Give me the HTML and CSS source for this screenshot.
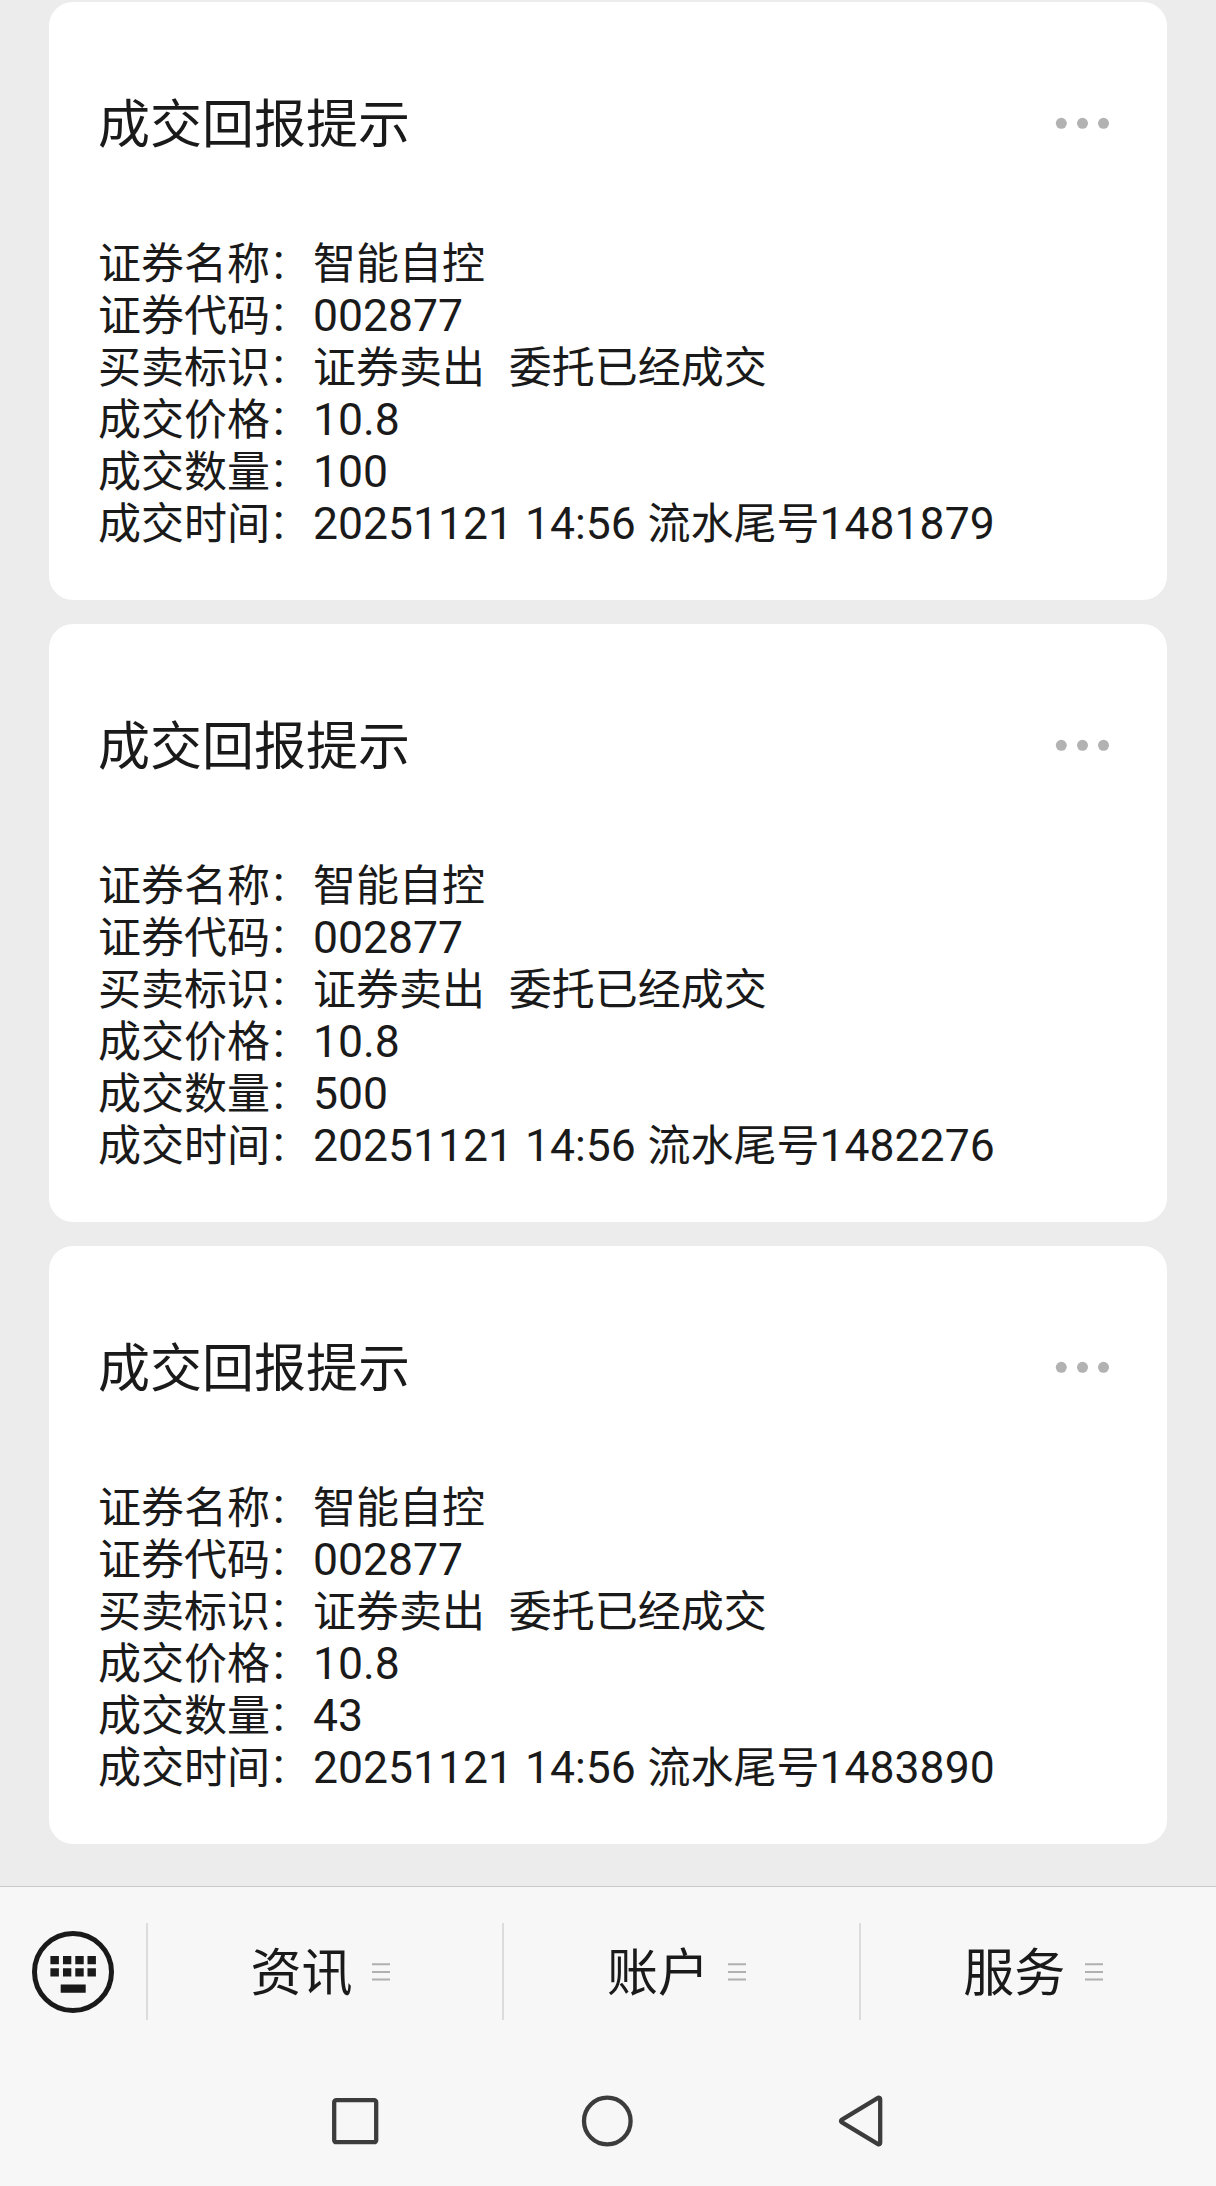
FILE: index.html
```html
<!DOCTYPE html>
<html lang="zh-CN">
<head>
<meta charset="utf-8">
<title>成交回报提示</title>
<link rel="stylesheet" href="styles.css">
</head>
<body>
<main class="feed">
  <article class="card">
    <header class="card-head">
      <h2 class="title">成交回报提示</h2>
      <svg class="more" viewBox="0 0 54 12"><circle cx="6.3" cy="6.3" r="5.5"/><circle cx="27.5" cy="6.3" r="5.5"/><circle cx="48.5" cy="6.3" r="5.5"/></svg>
    </header>
    <div class="lines">
      <p>证券名称<span class="colon">：</span>智能自控</p>
      <p>证券代码<span class="colon">：</span><span class="num">002877</span></p>
      <p>买卖标识<span class="colon">：</span>证券卖出<span class="num">  </span>委托已经成交</p>
      <p>成交价格<span class="colon">：</span><span class="num">10.8</span></p>
      <p>成交数量<span class="colon">：</span><span class="num">100</span></p>
      <p>成交时间<span class="colon">：</span><span class="num">20251121 14:56 </span>流水尾号<span class="num">1481879</span></p>
    </div>
  </article>
  <article class="card">
    <header class="card-head">
      <h2 class="title">成交回报提示</h2>
      <svg class="more" viewBox="0 0 54 12"><circle cx="6.3" cy="6.3" r="5.5"/><circle cx="27.5" cy="6.3" r="5.5"/><circle cx="48.5" cy="6.3" r="5.5"/></svg>
    </header>
    <div class="lines">
      <p>证券名称<span class="colon">：</span>智能自控</p>
      <p>证券代码<span class="colon">：</span><span class="num">002877</span></p>
      <p>买卖标识<span class="colon">：</span>证券卖出<span class="num">  </span>委托已经成交</p>
      <p>成交价格<span class="colon">：</span><span class="num">10.8</span></p>
      <p>成交数量<span class="colon">：</span><span class="num">500</span></p>
      <p>成交时间<span class="colon">：</span><span class="num">20251121 14:56 </span>流水尾号<span class="num">1482276</span></p>
    </div>
  </article>
  <article class="card">
    <header class="card-head">
      <h2 class="title">成交回报提示</h2>
      <svg class="more" viewBox="0 0 54 12"><circle cx="6.3" cy="6.3" r="5.5"/><circle cx="27.5" cy="6.3" r="5.5"/><circle cx="48.5" cy="6.3" r="5.5"/></svg>
    </header>
    <div class="lines">
      <p>证券名称<span class="colon">：</span>智能自控</p>
      <p>证券代码<span class="colon">：</span><span class="num">002877</span></p>
      <p>买卖标识<span class="colon">：</span>证券卖出<span class="num">  </span>委托已经成交</p>
      <p>成交价格<span class="colon">：</span><span class="num">10.8</span></p>
      <p>成交数量<span class="colon">：</span><span class="num">43</span></p>
      <p>成交时间<span class="colon">：</span><span class="num">20251121 14:56 </span>流水尾号<span class="num">1483890</span></p>
    </div>
  </article>
</main>
<footer class="bottom">
  <nav class="menu">
    <div class="keyboard">
      <svg width="82" height="82" viewBox="0 0 82 82">
        <circle cx="41" cy="41" r="38.5" fill="none" stroke="#1a1a1a" stroke-width="5"/>
        <path fill="#1a1a1a" d="M18.4 25h8.5v8.3h-8.5zM31 25h8.3v8.3H31zM43.3 25h8.4v8.3h-8.4zM55.5 25h8.4v8.3h-8.4zM18.4 37.2h8.5v8.4h-8.5zM31 37.2h8.3v8.4H31zM43.3 37.2h8.4v8.4h-8.4zM55.5 37.2h8.4v8.4h-8.4zM28.7 53.4h25v8.3h-25z"/>
      </svg>
    </div>
    <div class="item"><span class="label">资讯</span><svg class="bars" viewBox="0 0 18 18"><path d="M0 1.3h18M0 9h18M0 16.6h18"/></svg></div>
    <div class="item"><span class="label">账户</span><svg class="bars" viewBox="0 0 18 18"><path d="M0 1.3h18M0 9h18M0 16.6h18"/></svg></div>
    <div class="item"><span class="label">服务</span><svg class="bars" viewBox="0 0 18 18"><path d="M0 1.3h18M0 9h18M0 16.6h18"/></svg></div>
  </nav>
  <div class="system">
    <svg width="52" height="52" viewBox="0 0 52 52"><rect x="5.2" y="5.2" width="42" height="42" rx="2"/></svg>
    <svg width="52" height="52" viewBox="0 0 52 52"><circle cx="26.3" cy="26" r="23.3"/></svg>
    <svg width="52" height="52" viewBox="0 0 52 52"><path d="M9 24.6Q7 26 9 27.4L45 49.2Q47.2 49.8 47.2 47.6V4.4Q47.2 2.2 45 2.8Z"/></svg>
  </div>
</footer>
</body>
</html>
```
FILE: styles.css
```css
* { box-sizing: border-box; }
body {
  margin: 0;
  width: 1216px;
  height: 2186px;
  display: flex;
  flex-direction: column;
  overflow: hidden;
  background: #ececec;
  color: #1a1a1a;
  font-family: "Noto Sans CJK SC", sans-serif;
}
h2, p { margin: 0; font-weight: 400; }
.feed {
  height: 1886px;
  padding: 2px 49px 0;
  display: flex;
  flex-direction: column;
  gap: 24px;
}
.card {
  height: 598px;
  padding: 81px 50px 0 49px;
  background: #fff;
  border-radius: 24px;
}
.card-head {
  display: flex;
  align-items: center;
  justify-content: space-between;
  height: 80px;
}
.title { height: 80px; font-size: 52px; line-height: 76px; }
.more { width: 54px; height: 12px; margin-right: 8px; fill: #b2b2b2; }
.lines { padding-top: 71px; font-size: 43px; }
.lines p { height: 52px; line-height: 52px; white-space: pre; }
.num { font-family: Roboto, sans-serif; font-size: 44.5px; line-height: 1px; word-spacing: 0.8px; }
.colon { margin: 0 2px 0 -2px; font-weight: 300; }
.bottom { height: 300px; background: #f7f7f7; border-top: 1px solid #c8c8c8; }
.menu { display: flex; height: 169px; padding-top: 36px; }
.keyboard { width: 146px; height: 97px; padding: 8px 0 0 32px; }
.item {
  display: flex;
  align-items: center;
  width: 356.4px;
  height: 97px;
  padding-left: 102.5px;
  border-left: 2px solid #dcdcdc;
}
.label { height: 97px; font-size: 51px; line-height: 93px; }
.bars { width: 18px; height: 18px; margin-left: 19.5px; fill: none; stroke: #b0b0b0; stroke-width: 2; }
.system { display: flex; gap: 200px; padding: 39px 0 0 329px; }
.system svg { fill: none; stroke: #3c3c3c; stroke-width: 4.3; stroke-linejoin: round; }
```
